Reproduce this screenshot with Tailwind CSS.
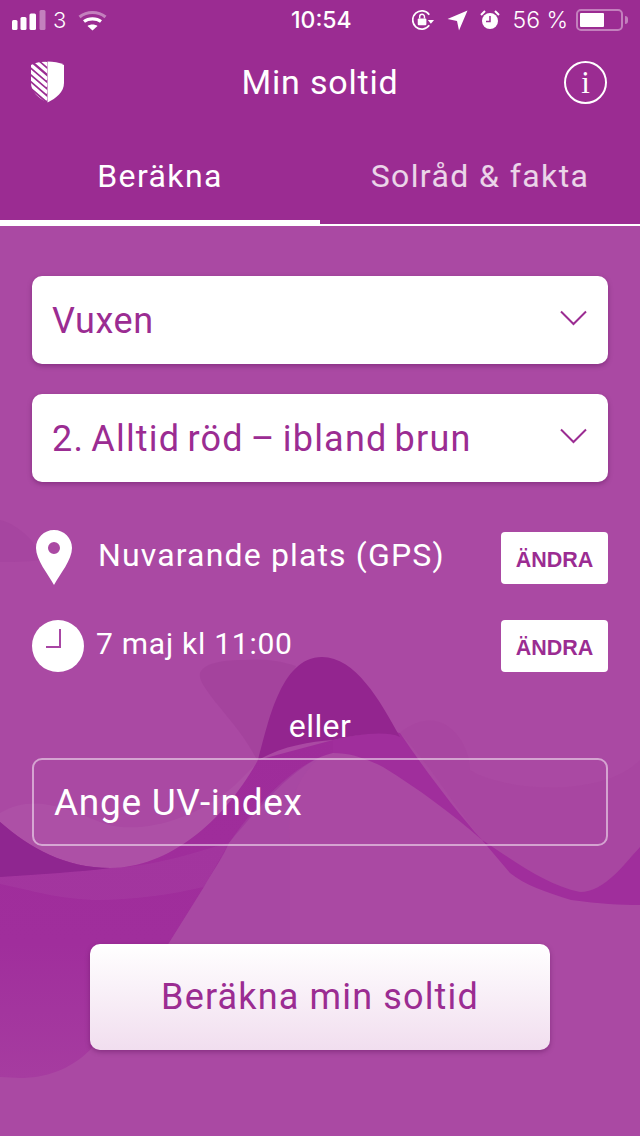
<!DOCTYPE html>
<html lang="sv">
<head>
  <meta charset="UTF-8">
  <meta name="viewport" content="width=device-width, initial-scale=1.0">
  <title>Min soltid</title>
  <script src="https://cdn.jsdelivr.net/npm/@tailwindcss/browser@4"></script>
</head>
<body class="bg-[#aa49a3] text-white font-['Roboto',sans-serif]">
  <div class="relative w-[640px] h-[1136px] overflow-hidden">

    <!-- background waves -->
    <svg class="absolute left-0 top-0" width="640" height="1136" viewBox="0 0 640 1136">
      <defs>
        <linearGradient id="magenta" x1="0" y1="0" x2="0" y2="1">
          <stop offset="0" stop-color="#9e2c9a"/>
          <stop offset="0.6" stop-color="#a02e9c"/>
          <stop offset="1" stop-color="#a63ca0"/>
        </linearGradient>
      </defs>
      <path d="M0 520C20 525 40 545 40 560C25 562 10 562 0 562Z" fill="#8f2a8a" opacity="0.12"/>
      <path d="M200 673C205 662 225 660 245 660C265 658 285 662 296 666L258 762C245 735 225 715 210 695C203 685 199 680 200 673Z" fill="#8a2585" opacity="0.16"/>
      <path d="M400 733C440 700 470 740 470 770C500 790 600 800 640 760V847C625 863 605 892 580 892C540 885 510 860 482 840C450 800 430 765 400 733Z" fill="#952a90" opacity="0.08"/>
      <path d="M0 813C30 795 60 805 100 822C130 835 190 825 235 785L258 762C225 820 170 868 110 868C65 868 30 848 0 822Z" fill="#ffffff" opacity="0.04"/>
      <!-- magenta band, left side -->
      <path d="M0 822C30 848 65 868 110 868C170 868 225 820 258 760L333 740V753C300 760 265 800 229 843C222 860 212 872 204 887L169 943L90 1050C70 1070 45 1078 20 1078L0 1077Z" fill="url(#magenta)"/>
      <path d="M0 822C30 848 65 868 110 868C80 872 40 874 0 877Z" fill="#8f2690"/>
      <path d="M0 877C40 874 80 872 110 868C160 866 200 850 229 843L204 887C170 895 130 900 100 900C60 900 30 890 0 884Z" fill="#ffffff" opacity="0.04"/>
      <!-- magenta band, right side -->
      <path d="M333 740C355 735 385 730 400 733C425 770 455 810 482 840C510 858 545 885 580 892C605 892 625 863 640 847V905C620 905 600 904 571 900C545 892 525 885 510 873L482 840C450 812 420 790 383 767C365 758 350 753 333 753Z" fill="#a02e9c"/>
      <!-- peak -->
      <path d="M258 760C268 725 280 657 322 657C355 657 380 700 400 737C385 730 355 735 333 740C310 742 285 745 258 760Z" fill="#93258f"/>
      <path d="M229 843C215 870 190 910 169 943H290V845C285 800 300 775 320 757C290 770 255 805 229 843Z" fill="#a647a3" opacity="0.5"/>
    </svg>

    <div class="relative flex flex-col">
      <div class="bg-[#9b2c92]">
        <!-- status bar -->
        <div class="h-[40px] flex items-center pl-[12px] pr-[12px] font-['Inter',sans-serif]">
          <div class="flex items-center w-[279px]">
            <svg width="34" height="20" viewBox="0 0 34 20" fill="#fff">
              <rect x="0" y="10" width="5.500" height="10" rx="1.500"/>
              <rect x="8.500" y="7" width="6" height="13" rx="1.500"/>
              <rect x="17.500" y="3.500" width="6.500" height="16.500" rx="1.500"/>
              <rect x="27.500" y="0" width="6" height="20" rx="1.500" opacity="0.4"/>
            </svg>
            <span class="ml-[7px] text-[22px] leading-none font-light">3</span>
            <svg class="ml-[12px]" width="29" height="21" viewBox="0 0 29 21" fill="none" stroke="#fff" stroke-width="3.200">
              <path d="M1.500 7C9 1 20 1 27.500 7" opacity="0.4"/>
              <path d="M6 11.500C10.500 8 18.500 8 23 11.500"/>
              <path d="M14.500 20.500L9.500 16C12 14 17 14 19.500 16Z" fill="#fff" stroke="none"/>
            </svg>
          </div>
          <div class="text-[23px] leading-none font-medium">10:54</div>
          <div class="flex items-center justify-end flex-1">
            <svg width="23" height="22" viewBox="0 0 24 22" fill="none">
              <path d="M18 5.500A9.500 9.500 0 1 0 18 16.500" stroke="#fff" stroke-width="1.800"/>
              <path d="M16.500 11H23L19.700 15Z" fill="#fff"/>
              <rect x="6" y="9.500" width="9" height="7" rx="1" fill="#fff"/>
              <path d="M8 9.500V7.500A2.500 2.500 0 0 1 13 7.500V9.500" stroke="#fff" stroke-width="1.500"/>
            </svg>
            <svg class="ml-[12px]" width="21" height="21" viewBox="0 0 21 21" fill="#fff"><path d="M20.500 0.500L12 20.500L10 11L0.500 9Z"/></svg>
            <svg class="ml-[12px]" width="20" height="20" viewBox="0 0 20 20" fill="none">
              <circle cx="10" cy="11" r="8" fill="#fff"/>
              <path d="M10 6V11.500H6" stroke="#9b2c92" stroke-width="1.500"/>
              <path d="M1 5L5 1M19 5L15 1" stroke="#fff" stroke-width="2"/>
            </svg>
            <span class="ml-[12px] text-[23px] leading-none font-light whitespace-nowrap">56 %</span>
            <div class="ml-[8px] w-[47px] h-[22px] border-2 border-white/40 rounded-[5px] p-[2px]">
              <div class="w-[24px] h-full bg-white rounded-[1px]"></div>
            </div>
            <div class="ml-[2px] w-[3px] h-[8px] bg-white/40 rounded-r-full"></div>
          </div>
        </div>
        <!-- nav -->
        <div class="h-[88px] flex items-center justify-between pl-[31px] pr-[33px] pb-[4px]">
          <svg width="33" height="42" viewBox="0 0 34 42">
            <defs>
              <clipPath id="shieldLeft"><path d="M17 0C11 0 5 1 0 3.500V22C0 31 8 38 17 42V0Z"/></clipPath>
            </defs>
            <path d="M17 0C23 0 29 1 34 3.500V22C34 31 26 38 17 42Z" fill="#fff"/>
            <g clip-path="url(#shieldLeft)" stroke="#fff" stroke-width="3.500">
              <path d="M-4 0L17 18M-4 7L17 25M-4 14L17 32M-4 21L17 39M-4 28L17 46M4 -1L19 12M12 -1L19 5"/>
            </g>
          </svg>
          <div class="ml-[12px] text-[34px] leading-none tracking-[0.8px]">Min soltid</div>
          <div class="w-[43px] h-[43px] rounded-full border-2 border-white flex items-center justify-center font-['Liberation_Serif',serif] text-[31px] leading-none">i</div>
        </div>
        <!-- tabs -->
        <div class="flex h-[98px] border-b-2 border-white">
          <div class="w-[320px] border-b-[4px] border-white flex items-center justify-center text-[32px] tracking-[1.400px] pt-[4px]">Beräkna</div>
          <div class="w-[320px] flex items-center justify-center text-[32px] tracking-[1.400px] text-white/80">Solråd &amp; fakta</div>
        </div>
      </div>

      <div class="px-[32px] pt-[50px] flex flex-col">
        <div class="h-[88px] bg-white rounded-[10px] shadow-[0_2px_5px_rgba(70,0,70,0.35)] flex items-center justify-between pl-[20px] pr-[21px] text-[#9b2c92] text-[36px] tracking-[0.6px]">
          <span class="pt-[2px]">Vuxen</span>
          <svg class="mb-[4px]" width="27" height="16" viewBox="0 0 27 16" fill="none" stroke="#9b2c92" stroke-width="2"><path d="M1 1.500L13.500 14L26 1.500"/></svg>
        </div>
        <div class="mt-[30px] h-[88px] bg-white rounded-[10px] shadow-[0_2px_5px_rgba(70,0,70,0.35)] flex items-center justify-between pl-[20px] pr-[21px] text-[#9b2c92] text-[36px] tracking-[1.200px] [word-spacing:-3px]">
          <span class="pt-[2px]">2. Alltid röd – ibland brun</span>
          <svg class="mb-[4px]" width="27" height="16" viewBox="0 0 27 16" fill="none" stroke="#9b2c92" stroke-width="2"><path d="M1 1.500L13.500 14L26 1.500"/></svg>
        </div>

        <div class="mt-[50px] h-[52px] flex items-center justify-between">
          <div class="flex items-center">
            <svg class="ml-[4px]" width="36" height="56" viewBox="0 0 36 56">
              <path fill-rule="evenodd" d="M18 0C8 0 0 8 0 18C0 30 12 44 18 55C24 44 36 30 36 18C36 8 28 0 18 0ZM18 12A6 6 0 1 1 18 24A6 6 0 1 1 18 12Z" fill="#fff"/>
            </svg>
            <span class="ml-[26px] pb-[6px] text-[32px] tracking-[1.150px]">Nuvarande plats (GPS)</span>
          </div>
          <div class="w-[107px] h-[52px] bg-white rounded-[4px] flex items-center justify-center pt-[5px] text-[#9b2c92] text-[21.500px] font-bold font-['Liberation_Sans',sans-serif]">ÄNDRA</div>
        </div>
        <div class="mt-[36px] h-[52px] flex items-center justify-between">
          <div class="flex items-center">
            <svg width="52" height="52" viewBox="0 0 52 52">
              <circle cx="26" cy="26" r="26" fill="#fff"/>
              <path d="M28 9V27H14" fill="none" stroke="#a846a4" stroke-width="2"/>
            </svg>
            <span class="ml-[12px] pb-[6px] text-[30px] tracking-[0.750px]">7 maj kl 11:00</span>
          </div>
          <div class="w-[107px] h-[52px] bg-white rounded-[4px] flex items-center justify-center pt-[5px] text-[#9b2c92] text-[21.500px] font-bold font-['Liberation_Sans',sans-serif]">ÄNDRA</div>
        </div>

        <div class="mt-[36px] text-center text-[32px] leading-[36px] tracking-[0.400px]">eller</div>
        <div class="mt-[14px] h-[88px] border-2 border-white/50 rounded-[10px] flex items-center pl-[20px] pt-[2px] text-[37px] tracking-[0.700px]">Ange UV-index</div>
        <div class="mt-[98px] mx-auto w-[460px] h-[106px] rounded-[10px] bg-gradient-to-b from-white to-[#f1deef] shadow-[0_2px_5px_rgba(70,0,70,0.35)] flex items-center justify-center text-[#9b2c92] text-[36px] tracking-[1.150px]">Beräkna min soltid</div>
      </div>
    </div>
  </div>
</body>
</html>
